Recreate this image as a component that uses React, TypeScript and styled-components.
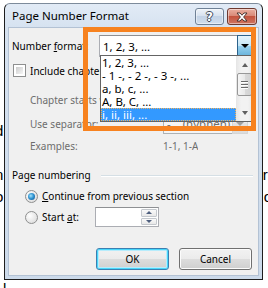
import React from 'react'
import styled, { createGlobalStyle } from 'styled-components'

const GlobalStyle = createGlobalStyle`
  html, body {
    margin: 0;
    padding: 0;
    background: #fff;
  }
  body {
    width: 268px;
    height: 288px;
    overflow: hidden;
    font-family: 'Noto Sans', 'Open Sans', sans-serif;
    font-size: 10px;
  }
`

const Page = styled.div`
  position: relative;
  width: 268px;
  height: 288px;
  overflow: hidden;
  background: #fff;
`

// document text peeking out behind the dialog
const Doc = styled.div`
  display: flex;
  flex-direction: column;
  padding-top: 120px;
  font-family: 'Liberation Sans', sans-serif;
  font-size: 15px;
  color: #000;
`

const DocLine = styled.div<{ $mt?: number }>`
  display: flex;
  justify-content: space-between;
  height: 22px;
  line-height: 22px;
  margin-top: ${(p) => p.$mt ?? 0}px;
  white-space: nowrap;
`

const DocWord = styled.span<{ $ml?: number; $mr?: number }>`
  margin-left: ${(p) => p.$ml ?? 0}px;
  margin-right: ${(p) => p.$mr ?? 0}px;
`

const Window = styled.div`
  position: absolute;
  left: 4px;
  top: 3px;
  width: 259px;
  height: 277px;
  box-sizing: border-box;
  border: 1px solid #1e1e1e;
  border-top-color: #7d8b9b;
  border-radius: 6px 6px 0 0;
  background: linear-gradient(#e2ebf6, #d6e2f0 24px, #ccdaea);
  display: flex;
  flex-direction: column;
`

const TitleBar = styled.div`
  display: flex;
  align-items: flex-start;
  height: 23px;
  padding: 0 5px 0 7px;
`

const Title = styled.div`
  flex: 1;
  line-height: 23px;
  font-size: 11.5px;
  color: #000;
`

const CaptionButton = styled.div<{ $close?: boolean }>`
  display: flex;
  align-items: center;
  justify-content: center;
  box-sizing: border-box;
  width: ${(p) => (p.$close ? 30 : 29)}px;
  height: 17px;
  margin-top: 4px;
  margin-left: ${(p) => (p.$close ? 3 : 0)}px;
  border: 1px solid ${(p) => (p.$close ? '#6e3a30' : '#6f8196')};
  border-radius: 3px;
  background: ${(p) =>
    p.$close
      ? 'linear-gradient(#eab0a1, #d98a78 45%, #c4543e 50%, #cf7561)'
      : 'linear-gradient(#eef3f9, #d7e2ef 45%, #c3d3e6 50%, #d0ddec)'};
  box-shadow: inset 0 0 0 1px rgba(255, 255, 255, 0.45);
  color: #fff;
  font-family: 'DejaVu Sans', sans-serif;
  font-weight: bold;
  font-size: 12px;
  text-shadow: 1px 0 #3d4a5a, -1px 0 #3d4a5a, 0 1px #3d4a5a, 0 -1px #3d4a5a;
`

const Client = styled.div`
  position: relative;
  flex: 1;
  margin: 0 3px 3px;
  background: #f0f0f0;
  border: 1px solid #b3c2d4;
  display: flex;
  flex-direction: column;
  color: #000;
`

const Row = styled.div<{ $h: number; $mt: number; $indent?: number; $end?: boolean }>`
  display: flex;
  align-items: center;
  height: ${(p) => p.$h}px;
  margin-top: ${(p) => p.$mt}px;
  padding-left: ${(p) => (p.$end ? 0 : 3 + (p.$indent ?? 0))}px;
  padding-right: ${(p) => (p.$end ? 6 : 0)}px;
  justify-content: ${(p) => (p.$end ? 'flex-end' : 'flex-start')};
  gap: ${(p) => (p.$end ? 10 : 0)}px;
`

const Label = styled.span<{ $w?: number; $disabled?: boolean }>`
  width: ${(p) => (p.$w ? `${p.$w}px` : 'auto')};
  flex-shrink: 0;
  white-space: nowrap;
  overflow: hidden;
  color: ${(p) => (p.$disabled ? '#6d6d6d' : '#000')};
`

const Combo = styled.div<{ $w: number; $h: number; $disabled?: boolean }>`
  position: relative;
  display: flex;
  box-sizing: border-box;
  width: ${(p) => p.$w}px;
  height: ${(p) => p.$h}px;
  border: 1px solid ${(p) => (p.$disabled ? '#adb2b5' : '#abadb3')};
  border-top-color: ${(p) => (p.$disabled ? '#adb2b5' : '#8e9093')};
  background: ${(p) => (p.$disabled ? '#f4f4f4' : '#fff')};
  color: ${(p) => (p.$disabled ? '#6d6d6d' : '#000')};
  font-size: 11.5px;
`

const ComboText = styled.div`
  flex: 1;
  display: flex;
  align-items: center;
  padding-left: 3px;
  white-space: pre;
`

const ComboArrow = styled.div<{ $pressed?: boolean }>`
  display: flex;
  align-items: center;
  justify-content: center;
  box-sizing: border-box;
  width: 16px;
  margin: -1px -1px -1px 0;
  border: 1px solid ${(p) => (p.$pressed ? '#2c628b' : '#d5d5d5')};
  background: ${(p) =>
    p.$pressed
      ? 'linear-gradient(#e5f4fc, #c4e5f6 50%, #98d1ef 50%, #68b3db)'
      : 'linear-gradient(#f6f6f6, #ececec 50%, #e2e2e2 50%, #dcdcdc)'};
  &::after {
    content: '';
    border-left: 4px solid transparent;
    border-right: 4px solid transparent;
    border-top: 4px solid ${(p) => (p.$pressed ? '#000' : '#a0a0a0')};
  }
`

const DropList = styled.div`
  position: absolute;
  z-index: 2;
  top: 100%;
  left: 0;
  display: flex;
  box-sizing: border-box;
  width: 154px;
  height: 67px;
  margin-top: -1px;
  border: 1px solid #646464;
  background: #fff;
`

const Items = styled.div`
  flex: 1;
  display: flex;
  flex-direction: column;
`

const Item = styled.div<{ $selected?: boolean }>`
  height: 13px;
  line-height: 13px;
  padding-left: 1px;
  white-space: pre;
  color: ${(p) => (p.$selected ? '#fff' : '#000')};
  background: ${(p) => (p.$selected ? '#3399ff' : 'transparent')};
  outline: ${(p) => (p.$selected ? '1px dotted #f2b25c' : 'none')};
  outline-offset: -1px;
`

const ScrollBar = styled.div`
  display: flex;
  flex-direction: column;
  width: 17px;
  background: linear-gradient(90deg, #e5e5e5, #f2f2f2 30%, #f2f2f2 70%, #e5e5e5);
`

const ScrollArrow = styled.div<{ $down?: boolean }>`
  display: flex;
  align-items: center;
  justify-content: center;
  height: 17px;
  &::after {
    content: '';
    border-left: 3.5px solid transparent;
    border-right: 3.5px solid transparent;
    ${(p) => (p.$down ? 'border-top' : 'border-bottom')}: 4px solid #606060;
  }
`

const ScrollTrack = styled.div`
  flex: 1;
  display: flex;
  flex-direction: column;
  align-items: center;
`

const Thumb = styled.div`
  display: flex;
  flex-direction: column;
  align-items: center;
  justify-content: center;
  gap: 2px;
  box-sizing: border-box;
  width: 15px;
  height: 23px;
  border: 1px solid #989898;
  border-radius: 2px;
  background: linear-gradient(90deg, #f6f6f6, #e9e9e9 50%, #dadada 51%, #d2d2d2);
`

const Grip = styled.div`
  width: 7px;
  height: 1px;
  background: #6b6b6b;
  box-shadow: 0 1px #fff;
`

const Check = styled.div`
  box-sizing: border-box;
  width: 13px;
  height: 13px;
  margin-left: 1px;
  margin-right: 4px;
  flex-shrink: 0;
  border: 1px solid #8e8f8f;
  background: #fff;
  padding: 2px;
  &::after {
    content: '';
    display: block;
    width: 100%;
    height: 100%;
    background: linear-gradient(135deg, #cbcbcb, #f6f6f6);
  }
`

const Radio = styled.div<{ $checked?: boolean }>`
  display: flex;
  align-items: center;
  justify-content: center;
  box-sizing: border-box;
  width: 13px;
  height: 13px;
  margin-right: 4px;
  flex-shrink: 0;
  border: 1px solid #8e8f8f;
  border-radius: 50%;
  background: radial-gradient(circle at 35% 35%, #ffffff, #e6e6e6 60%, #d6d6d6);
  &::after {
    content: '';
    display: ${(p) => (p.$checked ? 'block' : 'none')};
    width: 7px;
    height: 7px;
    border-radius: 50%;
    background: radial-gradient(circle at 40% 40%, #a6e3fb, #3296d3 45%, #0b4a86);
  }
`

const GroupLine = styled.div`
  flex: 1;
  height: 1px;
  margin: 2px 5px 0 10px;
  background: #d5dfe5;
  border-bottom: 1px solid #fff;
`

const Spin = styled.div`
  display: flex;
  box-sizing: border-box;
  width: 64px;
  height: 20px;
  border: 1px solid #abadb3;
  border-top-color: #8e9093;
  background: #fff;
`

const SpinInput = styled.div`
  flex: 1;
`

const SpinButtons = styled.div`
  display: flex;
  flex-direction: column;
  width: 16px;
  gap: 1px;
  padding: 1px 1px 1px 0;
`

const SpinBtn = styled.div<{ $down?: boolean }>`
  flex: 1;
  display: flex;
  align-items: center;
  justify-content: center;
  border: 1px solid #c4c8cd;
  border-radius: 1px;
  background: linear-gradient(#fafafa, #e8e8e8);
  &::after {
    content: '';
    border-left: 3.5px solid transparent;
    border-right: 3.5px solid transparent;
    ${(p) => (p.$down ? 'border-top' : 'border-bottom')}: 3px solid #4e5f7e;
  }
`

const Button = styled.div<{ $default?: boolean }>`
  display: flex;
  align-items: center;
  justify-content: center;
  box-sizing: border-box;
  width: 73px;
  height: 22px;
  border: 1px solid ${(p) => (p.$default ? '#3c7fb1' : '#707070')};
  border-radius: 3px;
  background: linear-gradient(#f2f2f2, #ebebeb 50%, #dddddd 50%, #cfcfcf);
  box-shadow: ${(p) =>
    p.$default ? 'inset 0 0 0 1px #48d7fb, inset 0 0 0 2px #b7ecfc' : 'inset 0 0 0 1px #fcfcfc'};
  color: #000;
`

const Highlight = styled.div`
  position: absolute;
  z-index: 3;
  left: 74px;
  top: -1px;
  width: 173px;
  height: 104px;
  box-sizing: border-box;
  border: 5px solid #f7821f;
  pointer-events: none;
`

const formats = ['1, 2, 3, ...', '- 1 -, - 2 -, - 3 -, ...', 'a, b, c, ...', 'A, B, C, ...', 'i, ii, iii, ...']

const App = () => {
  return (
    <Page>
      <GlobalStyle />
      <Doc>
        <DocLine>
          <DocWord $ml={-5}>d</DocWord>
        </DocLine>
        <DocLine $mt={22}>
          <DocWord $ml={-5}>n</DocWord>
          <DocWord $mr={-8}>ru</DocWord>
        </DocLine>
        <DocLine>
          <DocWord $ml={-5}>o</DocWord>
          <DocWord $mr={-4}>o</DocWord>
        </DocLine>
        <DocLine $mt={70}>
          <DocWord $ml={3}>l</DocWord>
          <DocWord>&nbsp;</DocWord>
        </DocLine>
      </Doc>

      <Window>
        <TitleBar>
          <Title>Page Number Format</Title>
          <CaptionButton>?</CaptionButton>
          <CaptionButton $close>
            <svg width="12" height="10" viewBox="0 0 12 10">
              <path
                d="M1 1h3l2 2.2L8 1h3L7.6 5 11 9H8L6 6.8 4 9H1l3.4-4z"
                fill="#fff"
                stroke="#3d2a26"
                strokeWidth="0.9"
                strokeLinejoin="round"
              />
            </svg>
          </CaptionButton>
        </TitleBar>

        <Client>
          <Row $h={22} $mt={7}>
            <Label $w={87}>
              Number <u>f</u>ormat:
            </Label>
            <Combo $w={154} $h={22}>
              <ComboText>1, 2, 3, ...</ComboText>
              <ComboArrow $pressed />
              <DropList>
                <Items>
                  {formats.map((f, i) => (
                    <Item key={f} $selected={i === formats.length - 1}>
                      {f}
                    </Item>
                  ))}
                </Items>
                <ScrollBar>
                  <ScrollArrow />
                  <ScrollTrack>
                    <Thumb>
                      <Grip />
                      <Grip />
                      <Grip />
                    </Thumb>
                  </ScrollTrack>
                  <ScrollArrow $down />
                </ScrollBar>
              </DropList>
            </Combo>
          </Row>

          <Row $h={17} $mt={5}>
            <Check />
            <Label>Include chapter number</Label>
          </Row>

          <Row $h={22} $mt={10} $indent={18}>
            <Label $w={133} $disabled>
              Chapter starts with style:
            </Label>
            <Combo $w={85} $h={21} $disabled>
              <ComboText>Heading 1</ComboText>
              <ComboArrow />
            </Combo>
          </Row>

          <Row $h={21} $mt={2} $indent={18}>
            <Label $w={133} $disabled>
              Use separator:
            </Label>
            <Combo $w={85} $h={21} $disabled>
              <ComboText>-    (hyphen)</ComboText>
              <ComboArrow />
            </Combo>
          </Row>

          <Row $h={16} $mt={4} $indent={18}>
            <Label $w={133} $disabled>
              Examples:
            </Label>
            <Label $disabled>1-1, 1-A</Label>
          </Row>

          <Row $h={16} $mt={13}>
            <Label>Page numbering</Label>
            <GroupLine />
          </Row>

          <Row $h={18} $mt={4} $indent={13}>
            <Radio $checked />
            <Label>
              <u>C</u>ontinue from previous section
            </Label>
          </Row>

          <Row $h={20} $mt={2} $indent={13}>
            <Radio />
            <Label $w={53}>
              Start <u>a</u>t:
            </Label>
            <Spin>
              <SpinInput />
              <SpinButtons>
                <SpinBtn />
                <SpinBtn $down />
              </SpinButtons>
            </Spin>
          </Row>

          <Row $h={22} $mt={21} $end>
            <Button $default>OK</Button>
            <Button>Cancel</Button>
          </Row>

          <Highlight />
        </Client>
      </Window>
    </Page>
  )
}

export default App
